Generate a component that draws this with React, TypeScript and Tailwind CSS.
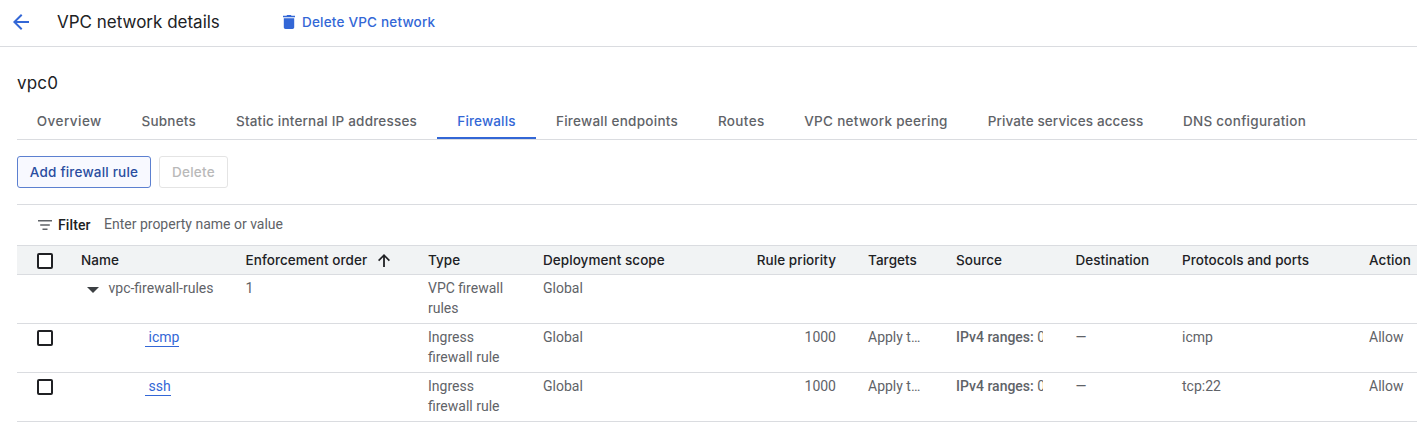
import type { ReactNode } from "react";

const tabs = [
  { label: "Overview", box: "w-[104.5px] tracking-[0.45px]" },
  { label: "Subnets", box: "w-[94.5px] tracking-[0.2px]" },
  { label: "Static internal IP addresses", box: "w-[221px] tracking-[0.2px]" },
  { label: "Firewalls", box: "w-[99px] tracking-[0.15px]", active: true },
  { label: "Firewall endpoints", box: "w-[162px] tracking-[0.26px]" },
  { label: "Routes", box: "w-[86.5px] tracking-[0.35px]" },
  { label: "VPC network peering", box: "w-[183px] tracking-[0.3px]" },
  { label: "Private services access", box: "w-[196px] tracking-[0.12px]" },
  { label: "DNS configuration", box: "w-[162px] tracking-[0.27px]" },
];

const rules = [
  { name: "icmp", protocols: "icmp" },
  { name: "ssh", protocols: "tcp:22" },
];

const columns =
  "grid grid-cols-[64px_164.5px_182.5px_115px_190.5px_102.500px_32px_88px_119.5px_106.5px_187px_48px]";

function Checkbox() {
  return <span className="block size-4 rounded-[2px] border-2 border-[#202124] bg-white" />;
}

function Head({ children }: { children?: ReactNode }) {
  return <div className="whitespace-nowrap pt-[2px]">{children}</div>;
}

export default function App() {
  return (
    <div className="h-[428px] w-[1417px] overflow-hidden bg-white font-['Roboto',sans-serif] text-sm text-[#5f6368]">
      <header className="flex h-[47px] items-center border-b border-[#dadce0] pb-[2px] font-['Inter',sans-serif]">
        <svg className="ml-[9px] size-6 fill-[#3367d6]" viewBox="0 0 24 24">
          <path d="M20 11H7.83l5.59-5.59L12 4l-8 8 8 8 1.41-1.41L7.83 13H20z" />
        </svg>
        <h1 className="ml-6 w-[226px] whitespace-nowrap text-[17px] text-[#202124]">VPC network details</h1>
        <button className="flex items-center text-[13.5px] font-medium text-[#3367d6]">
          <svg className="h-[14px] w-3" viewBox="0 0 12 14" fill="currentColor">
            <path d="M0 .8h3.4L4.2 0h3.6l.8.8H12v1.5H0zM.8 3.2h10.4v9.1c0 .9-.8 1.7-1.7 1.7h-7C1.6 14 .8 13.2.8 12.3z" />
          </svg>
          <span className="ml-[7px] whitespace-nowrap pt-[2px] tracking-[0.2px]">Delete VPC network</span>
        </button>
      </header>

      <main className="pl-[17px]">
        <h2 className="pt-[24px] font-['Inter',sans-serif] text-[17px] leading-6 tracking-[0.2px] text-[#202124]">vpc0</h2>

        <nav className="mt-2 flex h-[37px] border-b border-[#dadce0] font-['Inter',sans-serif] text-[13.5px] font-medium">
          {tabs.map((t) => (
            <div
              key={t.label}
              className={`flex shrink-0 justify-center whitespace-nowrap pt-[8px] leading-5 ${t.box} ${
                t.active ? "border-b-2 border-[#3367d6] text-[#3367d6]" : ""
              }`}
            >
              {t.label}
            </div>
          ))}
        </nav>

        <div className="mt-4 flex h-8 gap-2 font-['Inter',sans-serif] text-[13.5px] font-medium">
          <button className="w-[134px] whitespace-nowrap rounded-[3px] border border-[#5c80d0] bg-[#f8f9ff] pt-[2px] tracking-[0.2px] text-[#2a4da0]">
            Add firewall rule
          </button>
          <button className="w-[69px] rounded-[3px] border border-[#e4e4e4] pt-[2px] tracking-[0.25px] text-[#b9b9b9]">
            Delete
          </button>
        </div>

        <div className="mt-4 flex h-[41px] items-center border-t border-[#dadce0]">
          <svg className="ml-[21px] h-[10px] w-[14px] fill-[#5f6368]" viewBox="0 0 14 10">
            <path d="M0 0h14v1.600H0zM2.200 4.200h9.600v1.600H2.200zM4.500 8.400h5V10h-5z" />
          </svg>
          <span className="ml-[6px] w-[46px] font-medium tracking-[0.1px] text-[#202124]">Filter</span>
          <span className="pb-[2px]">Enter property name or value</span>
        </div>

        <div className={`${columns} h-[30px] items-center border-y border-[#dadce0] bg-[#f1f3f4] font-['Inter',sans-serif] text-[13.5px] font-medium tracking-[0.06px] text-[#202124]`}>
          <div className="pl-5 pt-px"><Checkbox /></div>
          <Head>Name</Head>
          <Head>
            <span className="flex items-center">
              <span className="w-[132.5px]">Enforcement order</span>
              <svg className="mb-px h-[13px] w-3 fill-[#202124]" viewBox="0 0 12 13">
                <path d="M6 0l6 6-1.200 1.200L6.900 3.300V13H5.100V3.300L1.200 7.200 0 6z" />
              </svg>
            </span>
          </Head>
          <Head>Type</Head>
          <Head>Deployment scope</Head>
          <div className="whitespace-nowrap pt-[2px] text-right">Rule priority</div>
          <div />
          <Head>Targets</Head>
          <Head>Source</Head>
          <Head>Destination</Head>
          <Head>Protocols and ports</Head>
          <Head>Action</Head>
        </div>

        <div className={`${columns} h-[49px] border-b border-[#dadce0] pt-[3px] leading-5`}>
          <div />
          <div className="flex pl-[6px]">
            <svg className="mt-[9px] h-[6px] w-3 fill-[#3c4043]" viewBox="0 0 12 6">
              <path d="M0 0h12L6 6z" />
            </svg>
            <span className="ml-[9.5px] whitespace-nowrap">vpc-firewall-rules</span>
          </div>
          <div>1</div>
          <div>VPC firewall<br />rules</div>
          <div>Global</div>
        </div>

        {rules.map((r) => (
          <div key={r.name} className={`${columns} h-[49px] border-b border-[#dadce0] pt-[3px] leading-5`}>
            <div className="pl-5 pt-[3px]"><Checkbox /></div>
            <div className="pl-16">
              <a className="inline-block h-5 border-b border-[#3367d6] pl-[3.5px] text-[#3367d6]">{r.name}</a>
            </div>
            <div />
            <div>Ingress<br />firewall rule</div>
            <div>Global</div>
            <div className="text-right">1000</div>
            <div />
            <div className="whitespace-nowrap">Apply t…</div>
            <div className="w-[87px] overflow-hidden whitespace-nowrap">
              <span className="font-medium">IPv4 ranges:</span> 0
            </div>
            <div>—</div>
            <div>{r.protocols}</div>
            <div>Allow</div>
          </div>
        ))}
      </main>
    </div>
  );
}
